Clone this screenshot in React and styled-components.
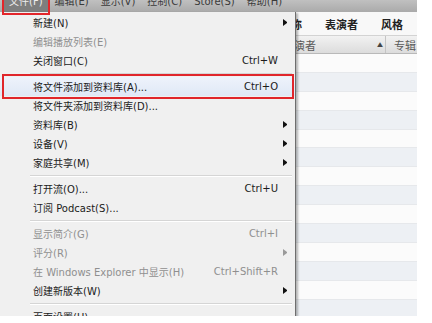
import React from "react";
import styled, { createGlobalStyle, css } from "styled-components";

const GlobalStyle = createGlobalStyle`
  html, body { margin: 0; padding: 0; background: #ffffff; }
  body { font-family: "DejaVu Sans", "Noto Sans CJK SC", sans-serif; }
  * { box-sizing: border-box; }
`;

const Frame = styled.div`
  position: relative;
  width: 417px;
  height: 316px;
  overflow: hidden;
  display: flex;
  flex-direction: column;
  background: #fbfbfb;
`;

const MenuBar = styled.div`
  flex: none;
  height: 12px;
  display: flex;
  padding-left: 3px;
  background: linear-gradient(#c0c0c0, #aaaaaa);
  color: #3a3a3a;
  font-size: 10px;
`;

const BarItem = styled.div`
  position: relative;
  flex: none;
  ${(p) =>
    p.$selected &&
    css`
      background: #7e7e7e;
      color: #eeeeee;
      &::after {
        content: "";
        position: absolute;
        left: -1px;
        right: -1px;
        top: -3px;
        bottom: -3px;
        border: 2px solid #e3262b;
        z-index: 5;
      }
    `}
`;

const BarClip = styled.div`
  height: 12px;
  overflow: hidden;
  display: flex;
  align-items: flex-end;
  padding: 0 6px;
`;

const BarLabel = styled.span`
  flex: none;
  line-height: 20px;
  white-space: nowrap;
`;

const TabRow = styled.div`
  flex: none;
  height: 24px;
  display: flex;
  align-items: center;
  justify-content: flex-end;
  gap: 23px;
  padding-right: 14px;
  background: #f8f8f8;
  border-bottom: 1px solid #d3d3d3;
`;

const TabLabel = styled.span`
  font-family: "Noto Sans CJK SC", sans-serif;
  font-size: 11px;
  font-weight: 700;
  color: #222;
  white-space: nowrap;
`;

const ColumnHeader = styled.div`
  flex: none;
  height: 18px;
  display: grid;
  grid-template-columns: 283px 103px 1fr;
  background: linear-gradient(#f2f2f2, #dcdcdc);
  border-bottom: 1px solid #b9b9b9;
  font-family: "Noto Sans CJK SC", sans-serif;
  font-size: 11px;
  color: #5a5a5a;
`;

const HeaderCell = styled.div`
  display: flex;
  align-items: center;
  justify-content: space-between;
  padding: ${(p) => (p.$pad ? "0 0 0 8px" : "0 2px 0 0")};
  border-right: ${(p) => (p.$divider ? "1px solid #c4c4c4" : "none")};
  white-space: nowrap;
  overflow: hidden;
`;

const SortMark = styled.span`
  font-size: 6px;
  color: #444;
`;

const Rows = styled.div`
  flex: 1;
  display: flex;
  flex-direction: column;
`;

const Row = styled.div`
  flex: none;
  height: 18.9px;
  background: ${(p) => (p.$alt ? "#edf0f4" : "#fbfbfb")};
  border-bottom: 1px solid #e6e8eb;
`;

const Menu = styled.div`
  position: absolute;
  left: 0;
  top: 12px;
  width: 296px;
  height: 320px;
  padding-top: 1px;
  background: #f0f0f0;
  border-right: 1px solid #6e6e6e;
  box-shadow: 2px 1px 2px rgba(0, 0, 0, 0.28);
  z-index: 2;
`;

const Item = styled.div`
  position: relative;
  height: 19px;
  display: flex;
  align-items: center;
  padding: 0 8px 0 33px;
  font-size: 10px;
  color: ${(p) => (p.$disabled ? "#8f8f8f" : "#1b1b1b")};
  ${(p) =>
    p.$active &&
    css`
      background: linear-gradient(#eef3fb, #dfe8f6);
      &::after {
        content: "";
        position: absolute;
        left: 2px;
        right: 1px;
        top: -3px;
        bottom: -3px;
        border: 2.5px solid #e0262b;
      }
    `}
`;

const Label = styled.span`
  flex: 1;
  white-space: nowrap;
`;

const Shortcut = styled.span`
  white-space: nowrap;
`;

const ArrowSlot = styled.span`
  flex: none;
  width: 4px;
  height: 7px;
  margin-left: 5px;
  ${(p) =>
    p.$show &&
    css`
      border-left: 4px solid ${p.$disabled ? "#9a9a9a" : "#111"};
      border-top: 3.5px solid transparent;
      border-bottom: 3.5px solid transparent;
    `}
`;

const Separator = styled.div`
  height: 7px;
  display: flex;
  align-items: center;
  padding: 0 3px 0 30px;
  &::before {
    content: "";
    flex: 1;
    height: 1px;
    background: #d5d5d5;
    box-shadow: 0 1px 0 #ffffff;
  }
`;

const barItems = ["文件(F)", "编辑(E)", "显示(V)", "控制(C)", "Store(S)", "帮助(H)"];

const menu = [
  { label: "新建(N)", arrow: true },
  { label: "编辑播放列表(E)", disabled: true },
  { label: "关闭窗口(C)", shortcut: "Ctrl+W" },
  { sep: true },
  { label: "将文件添加到资料库(A)...", shortcut: "Ctrl+O", active: true },
  { label: "将文件夹添加到资料库(D)..." },
  { label: "资料库(B)", arrow: true },
  { label: "设备(V)", arrow: true },
  { label: "家庭共享(M)", arrow: true },
  { sep: true },
  { label: "打开流(O)...", shortcut: "Ctrl+U" },
  { label: "订阅 Podcast(S)..." },
  { sep: true },
  { label: "显示简介(G)", shortcut: "Ctrl+I", disabled: true },
  { label: "评分(R)", arrow: true, disabled: true },
  { label: "在 Windows Explorer 中显示(H)", shortcut: "Ctrl+Shift+R", disabled: true },
  { label: "创建新版本(W)", arrow: true },
  { sep: true },
  { label: "页面设置(U)..." },
];

export default function App() {
  return (
    <>
      <GlobalStyle />
      <Frame>
        <MenuBar>
          {barItems.map((t, i) => (
            <BarItem key={t} $selected={i === 0}>
              <BarClip>
                <BarLabel>{t}</BarLabel>
              </BarClip>
            </BarItem>
          ))}
        </MenuBar>
        <TabRow>
          <TabLabel>名称</TabLabel>
          <TabLabel>表演者</TabLabel>
          <TabLabel>风格</TabLabel>
        </TabRow>
        <ColumnHeader>
          <HeaderCell>名称</HeaderCell>
          <HeaderCell $divider>
            <span>表演者</span>
            <SortMark>▲</SortMark>
          </HeaderCell>
          <HeaderCell $pad>专辑</HeaderCell>
        </ColumnHeader>
        <Rows>
          {Array.from({ length: 14 }).map((_, i) => (
            <Row key={i} $alt={i % 2 === 1} />
          ))}
        </Rows>
        <Menu>
          {menu.map((m, i) =>
            m.sep ? (
              <Separator key={i} />
            ) : (
              <Item key={i} $disabled={m.disabled} $active={m.active}>
                <Label>{m.label}</Label>
                {m.shortcut && <Shortcut>{m.shortcut}</Shortcut>}
                <ArrowSlot $show={m.arrow} $disabled={m.disabled} />
              </Item>
            )
          )}
        </Menu>
      </Frame>
    </>
  );
}
